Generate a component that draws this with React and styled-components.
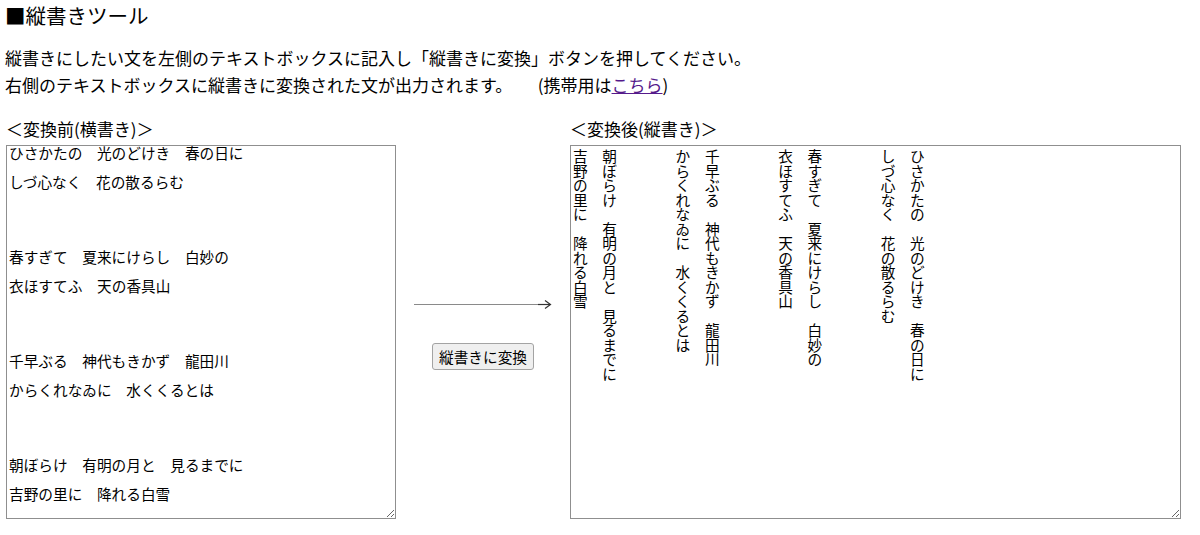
import styled, { createGlobalStyle } from "styled-components";

const poems = [
  ["ひさかたの　光のどけき　春の日に", "しづ心なく　花の散るらむ"],
  ["春すぎて　夏来にけらし　白妙の", "衣ほすてふ　天の香具山"],
  ["千早ぶる　神代もきかず　龍田川", "からくれなゐに　水くくるとは"],
  ["朝ぼらけ　有明の月と　見るまでに", "吉野の里に　降れる白雪"],
];

// turn the lines into rows of single characters, right to left
const toVertical = (list) => {
  const groups = [...list].reverse().map((p) => [...p].reverse().map((l) => Array.from(l)));
  const height = Math.max(...groups.flat().map((l) => l.length));
  const rows = [];
  for (let r = 0; r < height; r++) {
    rows.push(groups.map((g) => g.map((l) => l[r] || "\u3000").join("\u3000")).join("\u3000\u3000\u3000\u3000"));
  }
  return rows.join("\n");
};

const GlobalStyle = createGlobalStyle`
  body {
    margin: 0;
    background: #fff;
    color: #000;
    font-family: "Noto Sans CJK JP", "Noto Sans", sans-serif;
  }
`;

const Page = styled.div`
  padding: 0 0 0 5px;
`;

const Title = styled.h1`
  margin: 0 0 15px;
  font-size: 20.5px;
  font-weight: normal;
  line-height: 30px;
`;

const Intro = styled.p`
  margin: 0;
  font-size: 17px;
  line-height: 26.5px;
`;

const Link = styled.a`
  color: #551a8b;
  text-decoration: underline;
`;

const Workspace = styled.div`
  display: grid;
  grid-template-columns: 390px 174px 611px;
  grid-template-rows: 26px 374px;
  row-gap: 3px;
  margin: 18px 0 0 1px;
`;

const Label = styled.div`
  grid-column: ${(p) => p.$col};
  font-size: 17px;
  line-height: 26px;
  white-space: nowrap;
`;

const Box = styled.div`
  box-sizing: border-box;
  border: 1px solid #8f8f8f;
  background: #fff;
  padding: ${(p) => (p.$vertical ? "3px 2px 1px" : "1px 2px 0")};
  font-size: 14.67px;
  resize: both;
  overflow: auto;
`;

const Line = styled.div`
  height: 29px;
  line-height: 12px;
  white-space: pre;
`;

const Gap = styled.div`
  height: 46px;
`;

const Rows = styled.pre`
  margin: 0;
  font-family: inherit;
  font-size: 14.67px;
  line-height: 14.5px;
`;

const Middle = styled.div`
  display: flex;
  flex-direction: column;
  align-items: center;
  justify-content: center;
  gap: 33px;
  padding-top: 4px;
`;

const Button = styled.button`
  height: 27px;
  padding: 0 6px;
  border: 1px solid #a3a3a3;
  border-radius: 3px;
  background: #efefef;
  color: #000;
  font-family: inherit;
  font-size: 14.67px;
  line-height: 25px;
`;

const Arrow = () => (
  <svg width="138" height="12" viewBox="0 0 138 12">
    <line x1="0" y1="6.5" x2="128" y2="6.5" stroke="#8a8a8a" strokeWidth="1" />
    <line x1="124" y1="6.5" x2="136" y2="6.5" stroke="#333" strokeWidth="1.2" />
    <polyline points="131,2.5 136.5,6.5 131,10.5" fill="none" stroke="#333" strokeWidth="1.2" />
  </svg>
);

export default function App() {
  return (
    <Page>
      <GlobalStyle />
      <Title>■縦書きツール</Title>
      <Intro>
        縦書きにしたい文を左側のテキストボックスに記入し「縦書きに変換」ボタンを押してください。
        <br />
        右側のテキストボックスに縦書きに変換された文が出力されます。{"\u3000\u3000"}(携帯用は
        <Link href="#">こちら</Link>)
      </Intro>
      <Workspace>
        <Label $col={1}>＜変換前(横書き)＞</Label>
        <Label $col={3}>＜変換後(縦書き)＞</Label>
        <Box>
          {poems.map((p, i) => (
            <div key={i}>
              {i > 0 && <Gap />}
              {p.map((l) => (
                <Line key={l}>{l}</Line>
              ))}
            </div>
          ))}
        </Box>
        <Middle>
          <Arrow />
          <Button>縦書きに変換</Button>
        </Middle>
        <Box $vertical>
          <Rows>{toVertical(poems)}</Rows>
        </Box>
      </Workspace>
    </Page>
  );
}
